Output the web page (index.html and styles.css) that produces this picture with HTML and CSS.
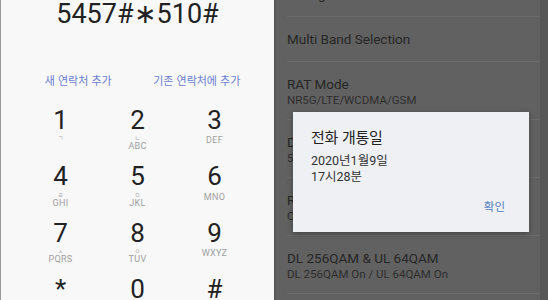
FILE: index.html
```html
<!DOCTYPE html>
<html lang="ko">
<head>
<meta charset="utf-8">
<link rel="stylesheet" href="styles.css">
</head>
<body>
<div class="dialer">
  <div class="number">5457#∗510#</div>
  <div class="actions">
    <span class="action">새 연락처 추가</span>
    <span class="action">기존 연락처에 추가</span>
  </div>
  <div class="keypad">
    <div class="key"><span class="digit">1</span><span class="ko">ㄱ</span></div>
    <div class="key"><span class="digit">2</span><span class="ko">ㄴ</span><span class="en">ABC</span></div>
    <div class="key"><span class="digit">3</span><span class="en">DEF</span></div>
    <div class="key"><span class="digit">4</span><span class="ko">ㄹ</span><span class="en">GHI</span></div>
    <div class="key"><span class="digit">5</span><span class="ko">ㅁ</span><span class="en">JKL</span></div>
    <div class="key"><span class="digit">6</span><span class="en">MNO</span></div>
    <div class="key"><span class="digit">7</span><span class="ko">ㅅ</span><span class="en">PQRS</span></div>
    <div class="key"><span class="digit">8</span><span class="ko">ㅇ</span><span class="en">TUV</span></div>
    <div class="key"><span class="digit">9</span><span class="en">WXYZ</span></div>
    <div class="key"><span class="digit">*</span></div>
    <div class="key"><span class="digit">0</span></div>
    <div class="key"><span class="digit">#</span></div>
  </div>
</div>
<div class="settings">
  <div class="list">
    <div class="item single"><div class="title">Debug Screen</div></div>
    <div class="item single"><div class="title">Multi Band Selection</div></div>
    <div class="item"><div class="title">RAT Mode</div><div class="sub">NR5G/LTE/WCDMA/GSM</div></div>
    <div class="item"><div class="title">DSS Mode</div><div class="sub">5G DSS On</div></div>
    <div class="item"><div class="title">RRC Release</div><div class="sub">Off</div></div>
    <div class="item"><div class="title">DL 256QAM &amp; UL 64QAM</div><div class="sub">DL 256QAM On / UL 64QAM On</div></div>
    <div class="item"><div class="title">Band Lock</div><div class="sub">Off</div></div>
  </div>
  <div class="dialog">
    <div class="dlg-title">전화 개통일</div>
    <div class="dlg-body">2020년1월9일<br>17시28분</div>
    <div class="dlg-buttons"><span class="dlg-btn">확인</span></div>
  </div>
  <div class="edge"></div>
</div>
</body>
</html>
```

FILE: styles.css
```css
* { box-sizing: border-box; }
html, body { margin: 0; padding: 0; }
body {
  width: 548px;
  height: 300px;
  overflow: hidden;
  display: flex;
  font-family: Roboto, "Noto Sans CJK KR", sans-serif;
  background: #5f5f5f;
}

/* ---------- dialer ---------- */
.dialer {
  width: 274px;
  height: 300px;
  flex: none;
  background: #f8f8f8;
  border-left: 1px solid #9a9a9a;
  display: flex;
  flex-direction: column;
  overflow: hidden;
}
.number {
  margin-top: -2px;
  height: 38px;
  text-align: center;
  font-size: 27px;
  line-height: 32px;
  color: #222;
}
.actions {
  margin-top: 42px;
  height: 16px;
  padding: 0 18px;
  display: flex;
}
.action {
  flex: 1;
  text-align: center;
  font-size: 11px;
  line-height: 16px;
  color: #6b7fd2;
  font-family: "Noto Sans CJK KR", sans-serif;
}
.keypad {
  margin: 17.6px auto 0;
  width: 231px;
  display: grid;
  grid-template-columns: repeat(3, 77px);
  grid-auto-rows: 56.5px;
}
.key {
  display: flex;
  flex-direction: column;
  align-items: center;
}
.digit {
  font-size: 26px;
  line-height: 28px;
  color: #222;
}
.ko {
  font-family: "Noto Sans CJK KR", sans-serif;
  font-size: 6px;
  line-height: 6px;
  height: 6px;
  margin-top: 1.5px;
  color: #a8a8a8;
}
.en {
  margin-top: 1.7px;
  font-size: 9px;
  line-height: 10px;
  color: #a0a0a0;
  letter-spacing: 0.3px;
}
.ko + .en { margin-top: 0.2px; }

/* ---------- settings ---------- */
.settings {
  position: relative;
  flex: 1;
  height: 300px;
  background: #616161;
  border-left: 2px solid #575757;
  overflow: hidden;
}
.list {
  margin-top: -28px;
  padding-left: 11px;
  color: #262626;
}
.item {
  height: 58px;
  padding-top: 13px;
  border-bottom: 1px solid #6b6b6b;
}
.item.single {
  height: 45px;
  padding-top: 0;
  display: flex;
  align-items: center;
}
.title {
  font-size: 13.5px;
  line-height: 18px;
}
.sub {
  font-size: 11.5px;
  line-height: 14px;
  color: #2e2e2e;
}
.edge {
  position: absolute;
  top: 0;
  right: 0;
  width: 8px;
  height: 300px;
  background: #575757;
}

/* ---------- dialog ---------- */
.dialog {
  position: absolute;
  left: 17px;
  top: 112px;
  width: 236px;
  height: 120px;
  background: #eff0f4;
  box-shadow: 0 2px 6px rgba(0, 0, 0, 0.3);
  padding: 14px 24px 0 18px;
  font-family: "Noto Sans CJK KR", sans-serif;
  display: flex;
  flex-direction: column;
}
.dlg-title {
  font-size: 15px;
  line-height: 22px;
  color: #222;
  letter-spacing: -0.3px;
}
.dlg-body {
  margin-top: 5px;
  font-size: 12.5px;
  line-height: 16px;
  color: #333;
  font-family: Roboto, "Noto Sans CJK KR", sans-serif;
}
.dlg-buttons {
  margin-top: auto;
  height: 34px;
  display: flex;
  justify-content: flex-end;
}
.dlg-btn {
  font-size: 11.5px;
  line-height: 16px;
  color: #4f7fbd;
}
```
